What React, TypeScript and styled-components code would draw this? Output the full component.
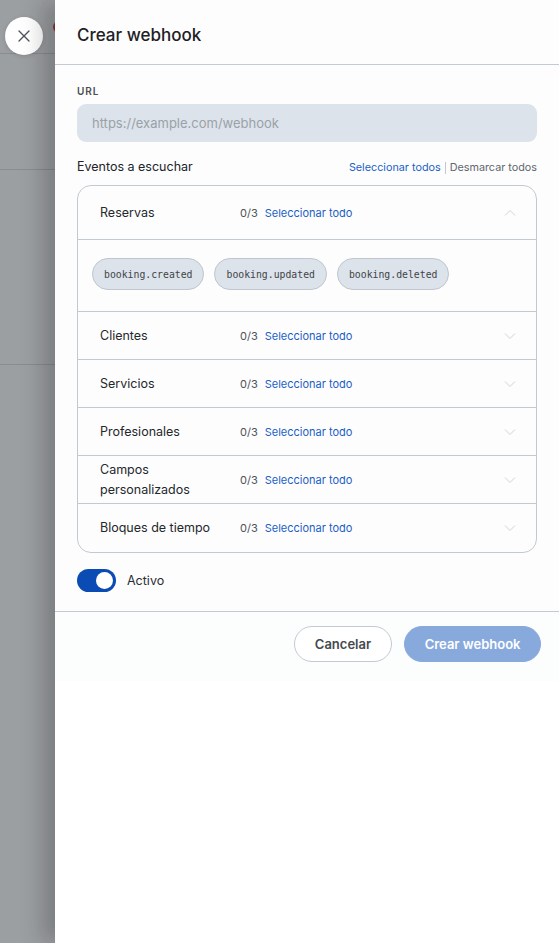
import styled, { createGlobalStyle } from 'styled-components';

const GlobalStyle = createGlobalStyle`
  * { box-sizing: border-box; }
  html, body {
    margin: 0;
    height: 100%;
    font-family: Inter, 'Noto Sans', sans-serif;
    background: #fff;
  }
`;

const Page = styled.div`
  height: 100vh;
  display: flex;
  flex-direction: column;
  background: #f3f4f6;
`;

const PageBand = styled.div<{ $h: number }>`
  height: ${(p) => p.$h}px;
  border-bottom: 1px solid #d2d4d7;
  position: relative;
`;

const RedDot = styled.span`
  position: absolute;
  left: 53px;
  top: 21px;
  width: 12px;
  height: 12px;
  border-radius: 50%;
  background: #e0453a;
`;

const Overlay = styled.div`
  position: fixed;
  inset: 0;
  background: rgba(35, 40, 46, 0.42);
`;

const CloseButton = styled.button`
  position: fixed;
  left: 5px;
  top: 17px;
  width: 38px;
  height: 38px;
  border-radius: 50%;
  border: none;
  background: #fff;
  display: flex;
  align-items: center;
  justify-content: center;
  padding: 0;
  cursor: pointer;
  box-shadow: 0 1px 4px rgba(0, 0, 0, 0.15);
`;

const Drawer = styled.aside`
  position: fixed;
  top: 0;
  right: 0;
  width: 504px;
  height: 100vh;
  background: #fff;
  box-shadow: -12px 0 22px rgba(0, 0, 0, 0.22);
  display: flex;
  flex-direction: column;
`;

const Header = styled.header`
  height: 65px;
  padding: 0 22px;
  display: flex;
  align-items: center;
  border-bottom: 1px solid #c3cad3;
  background: #fdfdfd;
`;

const Title = styled.h2`
  margin: 0;
  font-size: 17px;
  font-weight: 500;
  color: #1d2125;
  padding-top: 6px;
`;

const Body = styled.div`
  padding: 20px 22px 19px;
  background: #fdfdfd;
  display: flex;
  flex-direction: column;
`;

const FieldLabel = styled.label`
  font-size: 10px;
  font-weight: 600;
  letter-spacing: 0.9px;
  color: #4a4f55;
  line-height: 13px;
  margin-bottom: 6px;
`;

const UrlInput = styled.input`
  height: 38px;
  border: none;
  border-radius: 9px;
  background: #dce3ea;
  padding: 0 15px;
  font-family: inherit;
  font-size: 13px;
  color: #222;
  outline: none;
  &::placeholder { color: #9aa1a8; }
`;

const EventsRow = styled.div`
  margin-top: 15px;
  display: flex;
  align-items: center;
  justify-content: space-between;
  line-height: 17px;
`;

const EventsTitle = styled.span`
  font-size: 12.5px;
  color: #202428;
`;

const BulkActions = styled.div`
  display: flex;
  align-items: center;
  font-size: 10.8px;
  gap: 4px;
  padding-top: 2px;
`;

const LinkText = styled.span<{ $muted?: boolean }>`
  color: ${(p) => (p.$muted ? '#62676d' : '#1b5fc6')};
  cursor: pointer;
`;

const Sep = styled.span`
  width: 1px;
  height: 12px;
  background: #c3c8ce;
`;

const Accordion = styled.div`
  margin-top: 9px;
  border: 1px solid #c3c9d1;
  border-radius: 14px;
  overflow: hidden;
`;

const GroupHeader = styled.div<{ $h: number; $last?: boolean }>`
  height: ${(p) => p.$h}px;
  padding: 0 20px 0 22px;
  display: flex;
  align-items: center;
  border-bottom: ${(p) => (p.$last ? 'none' : '1px solid #c3c9d1')};
`;

const GroupName = styled.span`
  flex: 0 0 131px;
  font-size: 12.5px;
  line-height: 20px;
  color: #24282c;
`;

const Count = styled.span`
  font-size: 11px;
  color: #4c5157;
  margin-left: 9px;
`;

const SelectAll = styled.span`
  font-size: 11px;
  color: #1b5fc6;
  margin-left: 7px;
`;

const Chevron = styled.svg`
  margin-left: auto;
`;

const ChipArea = styled.div`
  padding: 18px 14px 21px;
  display: flex;
  gap: 10px;
  border-bottom: 1px solid #c3c9d1;
`;

const Chip = styled.span`
  height: 32px;
  padding: 0 11px;
  display: inline-flex;
  align-items: center;
  border-radius: 16px;
  background: #dce3ea;
  border: 1px solid #bfc6cf;
  font-family: 'DejaVu Sans Mono', 'Liberation Mono', monospace;
  font-size: 9.8px;
  color: #3f4449;
`;

const ToggleRow = styled.div`
  margin-top: 16px;
  display: flex;
  align-items: center;
  gap: 11px;
`;

const Toggle = styled.span`
  width: 39px;
  height: 23px;
  border-radius: 12px;
  background: #0a4cb4;
  display: flex;
  align-items: center;
  justify-content: flex-end;
  padding: 0 3px;
`;

const Knob = styled.span`
  width: 17px;
  height: 17px;
  border-radius: 50%;
  background: #fff;
`;

const ToggleLabel = styled.span`
  font-size: 12.5px;
  color: #2a2e33;
`;

const Footer = styled.footer`
  border-top: 1px solid #c3cad3;
  background: #fcfdfd;
  padding: 14px 18px 19px;
  display: flex;
  justify-content: flex-end;
  gap: 12px;
`;

const Button = styled.button<{ $primary?: boolean }>`
  height: 36px;
  border-radius: 18px;
  font-family: inherit;
  font-size: 13px;
  font-weight: 600;
  padding: 0 ${(p) => (p.$primary ? 19.5 : 20)}px;
  border: 1px solid ${(p) => (p.$primary ? '#87a9dc' : '#c4cad2')};
  background: ${(p) => (p.$primary ? '#87a9dc' : '#fff')};
  color: ${(p) => (p.$primary ? '#fff' : '#45494e')};
  cursor: pointer;
`;

const groups = [
  { name: 'Reservas', open: true },
  { name: 'Clientes' },
  { name: 'Servicios' },
  { name: 'Profesionales' },
  { name: 'Campos personalizados' },
  { name: 'Bloques de tiempo' },
];

const events = ['booking.created', 'booking.updated', 'booking.deleted'];

function ChevronIcon({ up }: { up?: boolean }) {
  return (
    <Chevron width="12" height="8" viewBox="0 0 12 8" fill="none">
      <polyline
        points={up ? '1,6.5 6,1.5 11,6.5' : '1,1.5 6,6.5 11,1.5'}
        stroke="#cfd4da"
        strokeWidth="1"
      />
    </Chevron>
  );
}

export default function App() {
  return (
    <>
      <GlobalStyle />
      <Page>
        <PageBand $h={54}>
          <RedDot />
        </PageBand>
        <PageBand $h={116} />
        <PageBand $h={195} />
      </Page>
      <Overlay />
      <CloseButton aria-label="Cerrar">
        <svg width="14" height="14" viewBox="0 0 14 14" fill="none">
          <path d="M2 2l10 10M12 2L2 12" stroke="#4b5057" strokeWidth="1.3" strokeLinecap="round" />
        </svg>
      </CloseButton>
      <Drawer>
        <Header>
          <Title>Crear webhook</Title>
        </Header>
        <Body>
          <FieldLabel>URL</FieldLabel>
          <UrlInput placeholder="https://example.com/webhook" />
          <EventsRow>
            <EventsTitle>Eventos a escuchar</EventsTitle>
            <BulkActions>
              <LinkText>Seleccionar todos</LinkText>
              <Sep />
              <LinkText $muted>Desmarcar todos</LinkText>
            </BulkActions>
          </EventsRow>
          <Accordion>
            {groups.map((g, i) => (
              <div key={g.name}>
                <GroupHeader $h={g.open ? 54 : 48} $last={i === groups.length - 1}>
                  <GroupName>{g.name}</GroupName>
                  <Count>0/3</Count>
                  <SelectAll>Seleccionar todo</SelectAll>
                  <ChevronIcon up={g.open} />
                </GroupHeader>
                {g.open && (
                  <ChipArea>
                    {events.map((e) => (
                      <Chip key={e}>{e}</Chip>
                    ))}
                  </ChipArea>
                )}
              </div>
            ))}
          </Accordion>
          <ToggleRow>
            <Toggle>
              <Knob />
            </Toggle>
            <ToggleLabel>Activo</ToggleLabel>
          </ToggleRow>
        </Body>
        <Footer>
          <Button>Cancelar</Button>
          <Button $primary>Crear webhook</Button>
        </Footer>
      </Drawer>
    </>
  );
}
